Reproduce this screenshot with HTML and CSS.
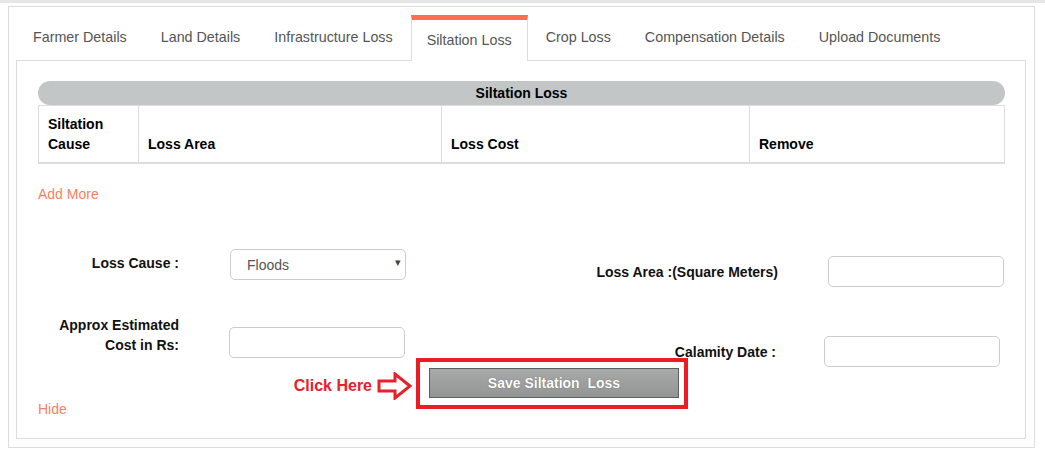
FILE: index.html
```html
<!DOCTYPE html>
<html lang="en">
<head>
    <meta charset="UTF-8">
    <title>Siltation Loss</title>
    <link rel="stylesheet" href="styles.css">
</head>
<body>
    <div class="topbar"></div>
    <div class="panel">
        <ul class="tabs">
            <li class="tab">Farmer Details</li>
            <li class="tab">Land Details</li>
            <li class="tab">Infrastructure Loss</li>
            <li class="tab active">Siltation Loss</li>
            <li class="tab">Crop Loss</li>
            <li class="tab">Compensation Details</li>
            <li class="tab">Upload Documents</li>
        </ul>

        <div class="tab-body">
            <div class="grid-title">Siltation Loss</div>
            <table class="grid">
                <thead>
                    <tr>
                        <th class="c1">Siltation Cause</th>
                        <th class="c2">Loss Area</th>
                        <th class="c3">Loss Cost</th>
                        <th>Remove</th>
                    </tr>
                </thead>
            </table>

            <a class="link add-more">Add More</a>

            <div class="form">
                <div class="half left">
                    <div class="row row-cause">
                        <label class="lbl">Loss Cause :</label>
                        <div class="select-wrap">
                            <select class="field">
                                <option>Floods</option>
                            </select>
                        </div>
                    </div>
                    <div class="row row-cost">
                        <label class="lbl">Approx Estimated Cost in Rs:</label>
                        <input type="text" class="field">
                    </div>
                </div>
                <div class="half right">
                    <div class="row row-area">
                        <label class="lbl">Loss Area :(Square Meters)</label>
                        <input type="text" class="field">
                    </div>
                    <div class="row row-date">
                        <label class="lbl">Calamity Date :</label>
                        <input type="text" class="field">
                    </div>
                </div>
            </div>

            <div class="actions">
                <div class="btn-holder">
                    <button class="btn-save">Save Siltation&nbsp; Loss</button>
                    <div class="callout-box"></div>
                    <div class="callout-note">
                        <span>Click Here</span>
                        <svg width="36" height="28" viewBox="0 0 36 28">
                            <polygon points="2,9 18,9 18,2 33,14 18,26 18,19 2,19" fill="#fff" stroke="#e8202a" stroke-width="3"/>
                        </svg>
                    </div>
                </div>
            </div>

            <a class="link hide">Hide</a>
        </div>
    </div>
</body>
</html>
```

FILE: styles.css
```css
body {
    margin: 0;
    font-family: "Liberation Sans", Arial, sans-serif;
    font-size: 14px;
    color: #111;
    background: #fff;
}
.topbar {
    height: 3px;
    background: #e6e6e6;
    margin-bottom: 3px;
}
.panel {
    margin: 0 10px 0 8px;
    border: 1px solid #ddd;
    padding: 8px 8px 8px 7px;
}
.tabs {
    list-style: none;
    margin: 0;
    padding: 0 0 0 1px;
    display: flex;
    align-items: flex-end;
}
.tab {
    font-size: 14.3px;
    line-height: 20px;
    color: #555;
    padding: 12px 16px 13px;
    margin-right: 2px;
}
.tab.active {
    position: relative;
    z-index: 1;
    background: #fff;
    border-top: 5px solid #f8704f;
    border-left: 1px solid #ddd;
    border-right: 1px solid #ddd;
    padding: 10px 15px 11px;
    margin-bottom: -1px;
}
.tab-body {
    border: 1px solid #ddd;
    padding: 20px 20px 20px 21px;
}
.grid-title {
    height: 24px;
    line-height: 24px;
    background: #c3c6c7;
    border-radius: 12px;
    text-align: center;
    font-weight: bold;
    font-size: 14px;
    color: #000;
}
.grid {
    width: 967px;
    border-collapse: collapse;
    border: 1px solid #ddd;
}
.grid th {
    text-align: left;
    vertical-align: bottom;
    font-size: 14px;
    line-height: 20px;
    color: #000;
    padding: 8px 9px;
    border: 1px solid #ddd;
    border-bottom: 2px solid #ddd;
}
.grid .c1 { width: 81px; }
.grid .c2 { width: 284px; }
.grid .c3 { width: 289px; }
.link {
    display: block;
    color: #f77f62;
    font-size: 14px;
    line-height: 18px;
}
.add-more {
    margin-top: 21px;
}
.form {
    display: flex;
    margin-top: 46px;
}
.half.left {
    width: 368px;
}
.half.right {
    flex: 1;
}
.row {
    display: flex;
}
.lbl {
    font-weight: bold;
    font-size: 14px;
    line-height: 20px;
    color: #111;
    text-align: right;
}
.field {
    box-sizing: border-box;
    width: 176px;
    height: 31px;
    border: 1px solid #ccc;
    border-radius: 5px;
    background: #fff;
    font-family: inherit;
    font-size: 14px;
    color: #555;
}
.left .lbl {
    width: 141px;
    margin-right: 51px;
}
.row-cause .lbl {
    padding-top: 4px;
}
.row-cost {
    margin-top: 35px;
}
.row-cost .lbl {
    width: 128px;
    margin-left: 13px;
}
.row-cost .field {
    margin-top: 12px;
    margin-left: -1px;
}
.select-wrap {
    position: relative;
}
.select-wrap select {
    appearance: none;
    -webkit-appearance: none;
    padding: 0 16px;
}
.select-wrap::after {
    content: "\25BE";
    position: absolute;
    right: 5px;
    top: 7px;
    font-size: 11px;
    color: #444;
}
.right .row {
    align-items: center;
}
.right .lbl {
    width: 372px;
    margin-right: 50px;
}
.row-area {
    margin-top: 7px;
}
.row-date {
    margin-top: 49px;
}
.row-date .lbl {
    width: 370px;
    margin-right: 48px;
}
.actions {
    margin-top: 1px;
    padding-left: 391px;
}
.btn-holder {
    position: relative;
    width: 250px;
}
.btn-save {
    display: block;
    width: 250px;
    height: 30px;
    border: 1px solid #56625e;
    background: linear-gradient(#a7aaa9, #929594);
    color: #fff;
    font-family: inherit;
    font-weight: bold;
    font-size: 14px;
    text-shadow: 0 0 1px #555;
}
.callout-box {
    position: absolute;
    left: -13px;
    top: -10px;
    width: 264px;
    height: 43px;
    border: 4px solid #ed1c24;
}
.callout-note {
    position: absolute;
    right: 266px;
    top: 4px;
    display: flex;
    align-items: center;
    gap: 5px;
    color: #e8202a;
    font-weight: bold;
    font-size: 16px;
    white-space: nowrap;
}
.hide {
    margin-top: 2px;
}
```
